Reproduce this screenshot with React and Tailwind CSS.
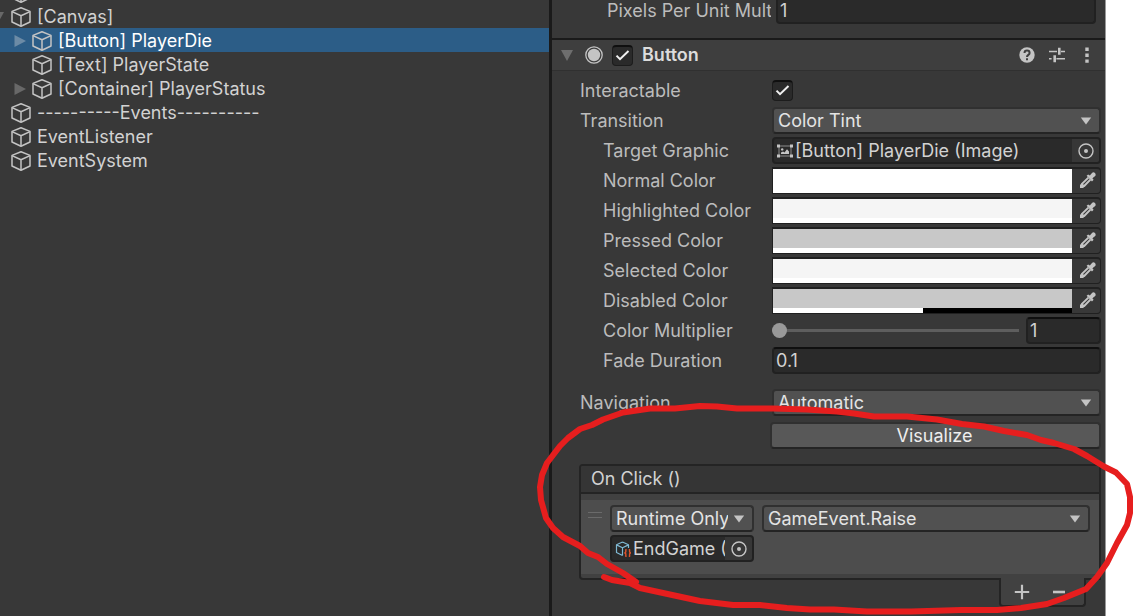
import { useState } from "react";

const hierarchy = [
  { name: "", depth: 0 },
  { name: "[Canvas]", depth: 0, arrow: "open" },
  { name: "[Button] PlayerDie", depth: 1, arrow: "closed", selected: true },
  { name: "[Text] PlayerState", depth: 1 },
  { name: "[Container] PlayerStatus", depth: 1, arrow: "closed" },
  { name: "----------Events----------", depth: 0 },
  { name: "EventListener", depth: 0 },
  { name: "EventSystem", depth: 0 },
];

const colors = [
  { id: "normal", label: "Normal Color", fill: "bg-white", alpha: "w-full" },
  { id: "highlighted", label: "Highlighted Color", fill: "bg-[#f5f5f5]", alpha: "w-full" },
  { id: "pressed", label: "Pressed Color", fill: "bg-[#c8c8c8]", alpha: "w-full" },
  { id: "selected", label: "Selected Color", fill: "bg-[#f5f5f5]", alpha: "w-full" },
  { id: "disabled", label: "Disabled Color", fill: "bg-[#c8c8c8]", alpha: "w-1/2" },
];

function CubeIcon() {
  return (
    <svg className="w-5 h-5 shrink-0" viewBox="0 0 20 20" fill="none" stroke="#c4c4c4" strokeWidth="1.5" strokeLinejoin="round">
      <path d="M10 .8 L19 4.4 V15 L10 19.3 L1 15 V4.4 Z" />
      <path d="M1 4.6 L10 8.8 L19 4.6 M10 8.8 V19" />
    </svg>
  );
}

function ScriptableIcon() {
  return (
    <svg className="w-4 h-4 shrink-0" viewBox="0 0 16 16" fill="none" strokeLinejoin="round">
      <path d="M7.5 1 L13.5 3.7 V7 M7.5 14.5 L1.5 11.5 V3.7 L7.5 1 M1.5 3.9 L7.5 6.8 L13.5 3.9 M7.5 6.8 V14.5" stroke="#7fb9d3" strokeWidth="1.2" />
      <path d="M11.6 8.6 H10.8 V11 L9.8 11.9 L10.8 12.8 V15.2 H11.6 M13.8 8.6 H14.6 V11 L15.6 11.9 L14.6 12.8 V15.2 H13.8" stroke="#e0552d" strokeWidth="1.4" />
    </svg>
  );
}

function ImageIcon() {
  return (
    <svg className="w-4 h-4 shrink-0" viewBox="0 0 16 16" fill="#c4c4c4">
      <path d="M2 3 H14 V13 H2 Z" fill="none" stroke="#8c8c8c" strokeWidth="1" />
      <path d="M0 1.6 h3 v3 h-3 Z M13 1.6 h3 v3 h-3 Z M0 11.6 h3 v3 h-3 Z M13 11.6 h3 v3 h-3 Z" />
      <circle cx="5.2" cy="6.4" r="1.2" />
      <path d="M4 11 V9.4 L6 8.6 L7.5 9.4 L10 6.2 L12 8.4 V11 Z" />
    </svg>
  );
}

function TargetIcon() {
  return (
    <svg className="w-4 h-4" viewBox="0 0 16 16">
      <circle cx="8" cy="8" r="7" fill="none" stroke="#c4c4c4" strokeWidth="1.4" />
      <circle cx="8" cy="8" r="2" fill="#c4c4c4" />
    </svg>
  );
}

function DropperIcon() {
  return (
    <svg className="w-4 h-4" viewBox="0 0 16 16">
      <path d="M8.4 5.6 L2.2 11.6 L1 15 L4.4 13.8 L10.4 7.6" fill="none" stroke="#c4c4c4" strokeWidth="2" strokeLinejoin="round" />
      <path d="M0 16 V13 L2 11 L5 14 L3 16 Z" fill="#c4c4c4" />
      <path d="M6.6 3.8 L8.2 2.4 L9.8 3.6 L12 .9 C14 -.8 16.8 2 15.2 4 L12.4 6.2 L13.6 7.8 L12 9.4 Z" fill="#c4c4c4" />
    </svg>
  );
}

function DownArrow({ className }) {
  return (
    <svg className={`w-3 h-2 ${className}`} viewBox="0 0 12 8">
      <path d="M.8 .6 H11.2 L6 7.4 Z" fill="#c4c4c4" />
    </svg>
  );
}

function Foldout({ open, className = "" }) {
  return (
    <svg className={`w-3 h-3 shrink-0 ${className}`} viewBox="0 0 12 12">
      <path d={open ? "M0 1 H12 L6 12 Z" : "M.5 0 L12 6 L.5 12 Z"} fill="currentColor" />
    </svg>
  );
}

function Dropdown({ id, label, options, className = "" }) {
  return (
    <div className={`relative min-w-0 ${className}`}>
      <select
        id={id}
        aria-label={label}
        className="block w-full h-[27px] pl-1 pr-6 appearance-none rounded border-2 border-[#303030] border-b-[#242424] bg-[#515151] text-[#e4e4e4] leading-[23px] outline-none"
      >
        {options.map((o) => (
          <option key={o}>{o}</option>
        ))}
      </select>
      <DownArrow className="absolute top-[10px] right-[9px] pointer-events-none" />
    </div>
  );
}

function Check({ id, label }) {
  const [on, setOn] = useState(true);
  return (
    <span className="relative block w-[21px] h-[21px] shrink-0">
      <input
        id={id}
        aria-label={label}
        type="checkbox"
        checked={on}
        onChange={() => setOn(!on)}
        className="block w-full h-full appearance-none rounded border border-[#1c1c1c] border-t-2 border-t-[#0f0f0f] bg-[#2a2a2a]"
      />
      {on && (
        <svg className="absolute inset-0 pointer-events-none" viewBox="0 0 21 21" fill="none" stroke="#f0f0f0" strokeWidth="2">
          <path d="M4.5 10.6 L8 14.2 L16.5 6" />
        </svg>
      )}
    </span>
  );
}

function ObjectField({ id, label, icon, value, className = "" }) {
  return (
    <div className={`flex min-w-0 h-[27px] rounded border-2 border-[#212121] bg-[#2a2a2a] overflow-hidden ${className}`}>
      <div className="flex flex-1 min-w-0 items-center pl-[3px] pt-px">
        {icon}
        <input
          id={id}
          aria-label={label}
          readOnly
          defaultValue={value}
          className="flex-1 min-w-0 pl-[2px] bg-transparent text-[#d2d2d2] outline-none"
        />
      </div>
      <button aria-label="Select object" className="flex w-[27px] shrink-0 items-center justify-center bg-[#373737]">
        <TargetIcon />
      </button>
    </div>
  );
}

function ColorField({ id, fill, alpha }) {
  return (
    <div className="flex flex-1 h-[27px] rounded-r border border-t-2 border-[#202020] bg-[#383838] overflow-hidden">
      <button id={id} className="flex flex-col flex-1">
        <span className={`block w-full flex-1 ${fill}`} />
        <span className="block w-full h-[5px] bg-black">
          <span className={`block h-full bg-white ${alpha}`} />
        </span>
      </button>
      <button aria-label="Pick color" className="flex w-7 items-center justify-center pl-1 pb-[2px]">
        <DropperIcon />
      </button>
    </div>
  );
}

function Row({ label, htmlFor, indent, className = "", children }) {
  return (
    <div className={`flex h-[30px] items-center pb-px ${className}`}>
      <label htmlFor={htmlFor} className={`w-[192px] shrink-0 whitespace-nowrap ${indent ? "pl-[23px]" : ""}`}>
        {label}
      </label>
      {children}
    </div>
  );
}

const inputClass =
  "h-[27px] min-w-0 pl-[2px] rounded border-2 border-[#212121] border-t-[#0f0f0f] bg-[#2a2a2a] text-[#d2d2d2] outline-none";

function Hierarchy() {
  return (
    <nav className="w-[549px] shrink-0 bg-[#383838] text-[#d2d2d2] overflow-hidden">
      <ul className="-mt-5">
        {hierarchy.map((item, i) => (
          <li
            key={i}
            className={`flex h-6 items-center pt-px whitespace-nowrap ${item.depth ? "pl-[14px]" : "-ml-2"} ${
              item.selected ? "bg-[#2c5d87] text-white" : ""
            }`}
          >
            <span className={`w-[18px] shrink-0 ${item.selected ? "text-[#6c8ba6]" : "text-[#686868]"}`}>
              {item.arrow && <Foldout open={item.arrow === "open"} />}
            </span>
            {!item.depth && <span className="w-px shrink-0" />}
            <CubeIcon />
            <span className="pl-[6px]">{item.name}</span>
          </li>
        ))}
      </ul>
    </nav>
  );
}

function ComponentHeader() {
  return (
    <header className="flex h-[33px] items-center pl-[9px] pr-[10px] border-t-2 border-b border-t-[#1a1a1a] border-b-[#303030] bg-[#3e3e3e]">
      <Foldout open className="text-[#6e6e6e]" />
      <svg className="w-[18px] h-[18px] ml-3 mr-[9px]" viewBox="0 0 18 18">
        <circle cx="9" cy="9" r="8.2" fill="none" stroke="#c4c4c4" strokeWidth="1.3" />
        <circle cx="9" cy="9" r="6.2" fill="#c4c4c4" />
      </svg>
      <Check id="enabled" label="Enabled" />
      <h2 className="flex-1 pl-[9px] font-semibold text-[#dcdcdc]">Button</h2>
      <button aria-label="Help">
        <svg className="w-4 h-4" viewBox="0 0 16 16">
          <circle cx="8" cy="8" r="7.7" fill="#c4c4c4" />
          <path d="M5.5 6 C5.5 2.8 10.6 2.8 10.6 6 C10.6 8 8 7.8 8 10" fill="none" stroke="#3e3e3e" strokeWidth="2" />
          <path d="M7 11.2 h2 v2 h-2 Z" fill="#3e3e3e" />
        </svg>
      </button>
      <button aria-label="Presets" className="ml-[14px]">
        <svg className="w-4 h-4" viewBox="0 0 16 16" fill="#c4c4c4">
          <path d="M0 3.8 h8 v1.4 h-8 Z M9 .8 h2.6 v7 h-2.6 Z M12 3.8 h4 v1.4 h-4 Z" />
          <path d="M0 11 h2.6 v1.4 h-2.6 Z M4.4 8.2 h2.6 v7 h-2.6 Z M7.4 11 h8.6 v1.4 h-8.6 Z" />
        </svg>
      </button>
      <button aria-label="Menu" className="ml-[14px]">
        <svg className="w-4 h-4" viewBox="0 0 16 16" fill="#c4c4c4">
          <path d="M6.3 .6 h3.4 v3.4 h-3.4 Z M6.3 6.6 h3.4 v3.4 h-3.4 Z M6.3 12.4 h3.4 v3.4 h-3.4 Z" />
        </svg>
      </button>
    </header>
  );
}

function OnClickEvents() {
  return (
    <section className="mt-[15px] -ml-px">
      <div className="rounded-t border-2 border-[#242424] rounded-bl overflow-hidden bg-[#414141]">
        <h3 className="h-[26px] pl-[10px] leading-[26px] bg-[#353535] text-[#d2d2d2]">On Click ()</h3>
        <div className="h-2 border-t-2 border-[#242424]" />
        <div className="flex h-[74px] pl-[7px] pr-[9px] pt-[5px] gap-2 bg-[#4d4d4d]">
          <div className="w-[14px] h-[6px] mt-[7px] border-y border-[#6a6a6a]" />
          <div className="flex flex-col w-36 gap-[3px]">
            <Dropdown label="Call state" options={["Runtime Only", "Off"]} />
            <ObjectField label="Target" icon={<ScriptableIcon />} value="EndGame (GameEvent)" />
          </div>
          <Dropdown label="Function" options={["GameEvent.Raise", "No Function"]} className="flex-1" />
        </div>
        <div className="h-1" />
      </div>
      <div className="flex w-[87px] h-[29px] -mt-[2px] ml-auto mr-[15px] relative rounded-b border-2 border-t-0 border-[#242424] bg-[#414141]">
        <button aria-label="Add" className="flex flex-1 items-center justify-center pl-[2px]">
          <svg className="w-4 h-4" viewBox="0 0 16 16" stroke="#c4c4c4" strokeWidth="2.2">
            <path d="M.8 8 H15.2 M8 .8 V15.2" />
          </svg>
        </button>
        <button aria-label="Remove" className="flex flex-1 items-center justify-center pr-[6px]">
          <svg className="w-3 h-4" viewBox="0 0 12 16" stroke="#c4c4c4" strokeWidth="2.6">
            <path d="M0 8 H12" />
          </svg>
        </button>
      </div>
    </section>
  );
}

function Inspector() {
  return (
    <section className="flex-1 min-w-0 border-l-[3px] border-l-[#1a1a1a] border-r border-r-[#999999] bg-[#383838] text-[#bcbcbc]">
      <div className="flex h-[38px] items-start pl-[55px] pr-[9px] gap-[5px] overflow-hidden">
        <label htmlFor="ppu" className="w-[164px] h-[22px] shrink-0 leading-[22px] whitespace-nowrap overflow-hidden">
          Pixels Per Unit Multiplier
        </label>
        <input id="ppu" defaultValue="1" className={`flex-1 -mt-[3px] ${inputClass}`} />
      </div>
      <ComponentHeader />
      <div className="pl-7 pr-1 pt-[5px]">
        <Row label="Interactable" htmlFor="interactable">
          <Check id="interactable" />
        </Row>
        <Row label="Transition" htmlFor="transition">
          <Dropdown id="transition" options={["Color Tint", "None", "Sprite Swap"]} className="flex-1" />
        </Row>
        <Row label="Target Graphic" htmlFor="graphic" indent>
          <ObjectField id="graphic" icon={<ImageIcon />} value="[Button] PlayerDie (Image)" className="flex-1" />
        </Row>
        {colors.map((c) => (
          <Row key={c.id} label={c.label} htmlFor={c.id} indent>
            <ColorField id={c.id} fill={c.fill} alpha={c.alpha} />
          </Row>
        ))}
        <Row label="Color Multiplier" htmlFor="multiplier" indent>
          <input
            id="multiplier"
            type="range"
            min="1"
            max="5"
            defaultValue="1"
            className="flex-1 min-w-0 h-4 mr-[7px] appearance-none bg-transparent [&::-webkit-slider-runnable-track]:h-[3px] [&::-webkit-slider-runnable-track]:bg-[#5e5e5e] [&::-webkit-slider-thumb]:appearance-none [&::-webkit-slider-thumb]:w-[15px] [&::-webkit-slider-thumb]:h-[15px] [&::-webkit-slider-thumb]:-mt-[6px] [&::-webkit-slider-thumb]:rounded-full [&::-webkit-slider-thumb]:bg-[#999999]"
          />
          <input aria-label="Color Multiplier value" defaultValue="1" className={`w-[75px] ${inputClass}`} />
        </Row>
        <Row label="Fade Duration" htmlFor="fade" indent>
          <input id="fade" defaultValue="0.1" className={`flex-1 ${inputClass}`} />
        </Row>
        <Row label="Navigation" htmlFor="navigation" className="mt-3">
          <Dropdown id="navigation" options={["Automatic", "None", "Horizontal"]} className="flex-1" />
        </Row>
        <button className="block h-[27px] mt-1 ml-[190px] w-[calc(100%-190px)] pr-[2px] rounded border-2 border-[#303030] border-b-[#242424] bg-[#585858] text-[#eeeeee] leading-[23px]">
          Visualize
        </button>
        <OnClickEvents />
      </div>
    </section>
  );
}

// hand-drawn marker around the On Click () list
function MarkerStroke() {
  return (
    <svg
      className="absolute top-0 left-0 w-[1134px] h-[616px] pointer-events-none"
      viewBox="0 0 1134 616"
      fill="none"
      stroke="#e61e1e"
      strokeWidth="6"
      strokeLinecap="round"
      strokeLinejoin="round"
    >
      <path d="M604 577 L612 580 L630 583 L640 588 L663 593 L700 601 L733 605 L760 605 L787 608 L810 609.5 L834 609.5 L867 611.5 L911 611.5 L961 610 L997 610 L1021 608 L1047 604 L1064 598 L1086 589 L1097 577 L1107 563 L1117 543 L1127 525 L1130 513 L1130 497 L1127 484 L1116 472.5 L1104 466.5 L1087 456 L1074 449 L1054 443 L1041 440 L1027 435 L1004 431 L984 426.5 L962 424 L937 419.5 L907 416.5 L874 416.5 L854 413.5 L837 411.5 L807 409.5 L773 408.5 L737 408.5 L717 406.5 L700 406 L675 408.5 L650 408.5 L623 412.5 L603 419.5 L592 425 L580 429 L568 438 L560 446 L547 463 L542 475 L540 487 L541 500 L546 518 L553 528 L563 537 L580 546 L588 553 L598 557 L607 564 L623 573 L636 582" />
    </svg>
  );
}

export default function App() {
  return (
    <main className="relative flex min-h-screen pr-7 overflow-hidden bg-white text-[18px] leading-6 font-['Inter',sans-serif] [font-optical-sizing:none]">
      <Hierarchy />
      <Inspector />
      <MarkerStroke />
    </main>
  );
}
